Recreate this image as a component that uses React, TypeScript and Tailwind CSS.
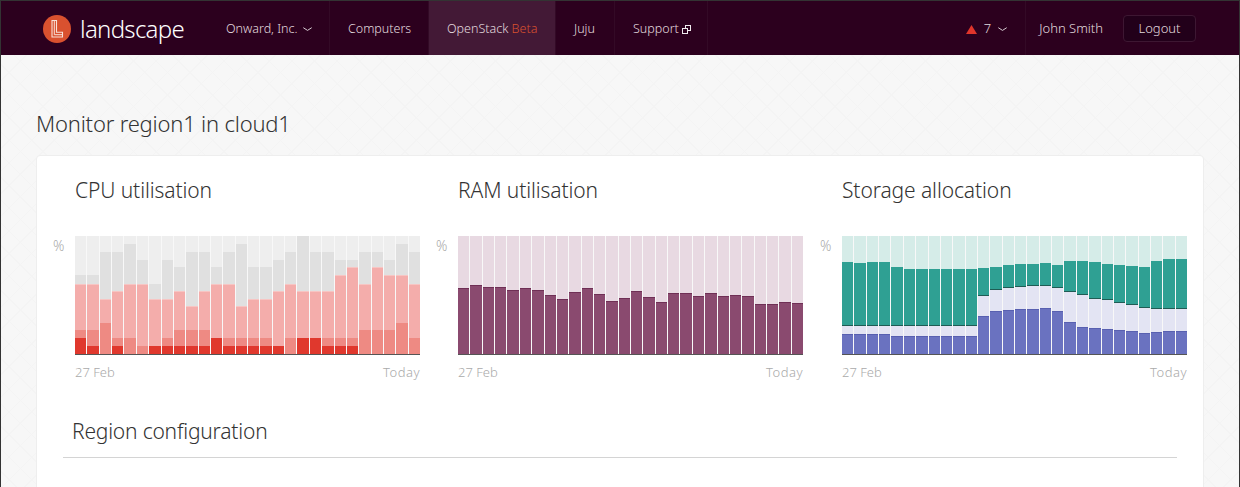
const font = "font-['Noto_Sans','Open_Sans',sans-serif]"

// heights in px from the chart floor, chart is 118px tall
const cpu = [
  [79, 70, 24, 16], [79, 70, 24, 8], [102, 55, 31, 0], [102, 63, 16, 8], [110, 70, 16, 0], [94, 70, 8, 0], [70, 55, 8, 8],
  [94, 55, 16, 8], [87, 63, 24, 8], [102, 48, 24, 8], [102, 63, 24, 8], [87, 70, 16, 16], [102, 70, 16, 8], [110, 48, 16, 8],
  [87, 55, 16, 8], [87, 55, 16, 8], [94, 63, 8, 8], [102, 70, 16, 0], [118, 63, 16, 16], [102, 63, 16, 16], [102, 63, 16, 8],
  [94, 79, 16, 8], [94, 87, 16, 8], [102, 70, 24, 0], [102, 87, 24, 0], [94, 79, 24, 0], [110, 79, 31, 0], [102, 70, 16, 0],
]
const ram = [
  66, 69, 67, 67, 64, 66, 64, 59, 55, 62, 66, 60, 53, 56, 63, 57, 52, 61, 61, 58, 61, 58, 59, 58, 50, 50, 52, 51,
]
const storage = [
  [92, 28, 20], [91, 28, 20], [92, 28, 20], [92, 28, 20], [87, 28, 18], [85, 28, 18], [85, 28, 18], [85, 28, 18], [85, 28, 18],
  [85, 28, 18], [85, 28, 18], [86, 58, 38], [87, 64, 43], [89, 66, 44], [90, 67, 45], [90, 68, 45], [91, 68, 46], [89, 66, 43],
  [93, 62, 32], [93, 59, 27], [92, 55, 26], [90, 54, 25], [89, 51, 24], [88, 49, 23], [87, 46, 21], [93, 45, 22], [95, 45, 23], [95, 45, 23],
]

const Chevron = () => (
  <svg width="9" height="5" viewBox="0 0 9 5" fill="none" stroke="#d8ced4" strokeWidth="1" className="shrink-0">
    <path d="M0.3 0.7 4.5 3.4 8.7 0.7" />
  </svg>
)

const NavItem = ({ children, className = "" }: { children: React.ReactNode; className?: string }) => (
  <a className={`flex h-full items-center whitespace-nowrap border-r border-[#330a26] pl-[18px] pt-[2px] ${className}`}>{children}</a>
)

const CpuBar = ({ v }: { v: number[] }) => (
  <div className="flex flex-1 flex-col bg-[#eeeeee]">
    <div className="flex-1" />
    <div className="bg-[#e0e0e0]" style={{ height: v[0] - v[1] }} />
    <div className="border-t border-[#f7c5c3] bg-[#f4adab]" style={{ height: v[1] - v[2] }} />
    <div className="bg-[#ee8a83]" style={{ height: v[2] - v[3] }} />
    <div className="bg-[#e0382d]" style={{ height: v[3] }} />
  </div>
)

const RamBar = ({ v }: { v: number }) => (
  <div className="flex flex-1 flex-col bg-[#e8d9e2]">
    <div className="flex-1" />
    <div className="border-t border-[#6f2f55] bg-[#8a4a6f]" style={{ height: v }} />
  </div>
)

const StorageBar = ({ v }: { v: number[] }) => (
  <div className="flex flex-1 flex-col bg-[#d5ece8]">
    <div className="flex-1" />
    <div className="border-b border-[#1f5c54] bg-[#2fa093]" style={{ height: v[0] - v[1] }} />
    <div className="bg-[#e3e4f3]" style={{ height: v[1] - v[2] }} />
    <div className="border-t border-[#5860b0] bg-[#6a72c0]" style={{ height: v[2] }} />
  </div>
)

const Chart = ({ title, children }: { title: string; children: React.ReactNode }) => (
  <div>
    <h2 className="pl-[22px] text-[21px] leading-[28px] font-light tracking-[-0.1px] text-[#333333]">{title}</h2>
    <div className="mt-[32px] flex">
      <span className="w-[22px] pt-[1px] text-[14px] leading-[18px] font-light text-[#aaaaaa]">%</span>
      <div className="w-[345px]">
        <div className="flex h-[119px] gap-px border-b border-[#555555] bg-[#f8f8f8]">{children}</div>
        <div className="mt-[8px] flex justify-between text-[13px] leading-[18px] font-light text-[#aaaaaa]">
          <span>27 Feb</span>
          <span className="tracking-[0.5px]">Today</span>
        </div>
      </div>
    </div>
  </div>
)

export default function App() {
  return (
    <div className={`flex h-[487px] flex-col overflow-hidden border-x border-t border-[#333333] ${font}`}>
      <header className="flex h-[54px] shrink-0 items-center bg-[#2c001e] text-[12.5px] font-light text-[#e2dade]">
        <div className="flex w-[207px] items-center pt-[1px] pl-[42px]">
          <svg width="28" height="28" viewBox="0 0 28 28">
            <circle cx="14" cy="14" r="14" fill="#d9512f" />
            <path d="M9 5.5h4.5v11.8h6v4.7H9z" fill="none" stroke="#f8e0d8" strokeWidth="1.1" />
            <path d="M11.3 5.5v14.2h8.2" fill="none" stroke="#f8e0d8" strokeWidth="1" />
          </svg>
          <span className="ml-[9px] text-[24px] leading-none font-light tracking-[-0.7px] text-white">landscape</span>
        </div>
        <NavItem className="w-[122px] gap-[5px]">
          Onward, Inc. <Chevron />
        </NavItem>
        <NavItem className="w-[99px]">Computers</NavItem>
        <NavItem className="w-[127px] bg-[#431936]">
          <span>
            OpenStack <span className="text-[#d9512f]">Beta</span>
          </span>
        </NavItem>
        <NavItem className="w-[59px]">Juju</NavItem>
        <NavItem className="w-[93px]">
          Support
          <svg width="9" height="9" viewBox="0 0 9 9" fill="none" stroke="#f0eaee" strokeWidth="1" className="ml-[3px] shrink-0">
            <rect x="3.5" y="0.5" width="5" height="5" />
            <rect x="0.5" y="3.5" width="5" height="5" fill="#2c001e" />
          </svg>
        </NavItem>
        <div className="ml-auto flex h-full items-center text-[13px]">
          <div className="flex h-full items-center border-r border-[#330a26] pt-[2px] pr-[18px]">
            <svg width="11" height="9" viewBox="0 0 11 9">
              <path d="M5.5 0 11 9H0z" fill="#e0352b" />
            </svg>
            <span className="ml-[7px]">7</span>
            <span className="ml-[7px]">
              <Chevron />
            </span>
          </div>
          <span className="mt-[2px] ml-[13px]">John Smith</span>
          <button className="mt-[1px] mr-[43px] ml-[20px] h-[27px] w-[73px] rounded-[4px] border border-[#3d1732] bg-[#22001a] text-[#e2dade]">
            Logout
          </button>
        </div>
      </header>
      <main className="flex-1 bg-[#f7f7f7] bg-[repeating-linear-gradient(45deg,#f4f4f4_0,#f4f4f4_1px,transparent_1px,transparent_16px),repeating-linear-gradient(-45deg,#f4f4f4_0,#f4f4f4_1px,transparent_1px,transparent_16px)] pl-[35px]">
        <h1 className="mt-[52px] text-[22px] leading-[32px] font-light tracking-[-0.2px] text-[#333333]">Monitor region1 in cloud1</h1>
        <section className="mt-[16px] h-[340px] w-[1168px] rounded-[4px] border border-[#eeeeee] bg-white pt-[20px] pl-[16px]">
          <div className="grid grid-cols-[383px_384px_367px]">
            <Chart title="CPU utilisation">
              {cpu.map((v, i) => (
                <CpuBar key={i} v={v} />
              ))}
            </Chart>
            <Chart title="RAM utilisation">
              {ram.map((v, i) => (
                <RamBar key={i} v={v} />
              ))}
            </Chart>
            <Chart title="Storage allocation">
              {storage.map((v, i) => (
                <StorageBar key={i} v={v} />
              ))}
            </Chart>
          </div>
          <div className="mt-[36px] mr-[26px] ml-[10px] border-b border-[#d4d4d4] pb-[12px] pl-[9px]">
            <h2 className="text-[21px] leading-[28px] font-light tracking-[-0.2px] text-[#333333]">Region configuration</h2>
          </div>
        </section>
      </main>
    </div>
  )
}
